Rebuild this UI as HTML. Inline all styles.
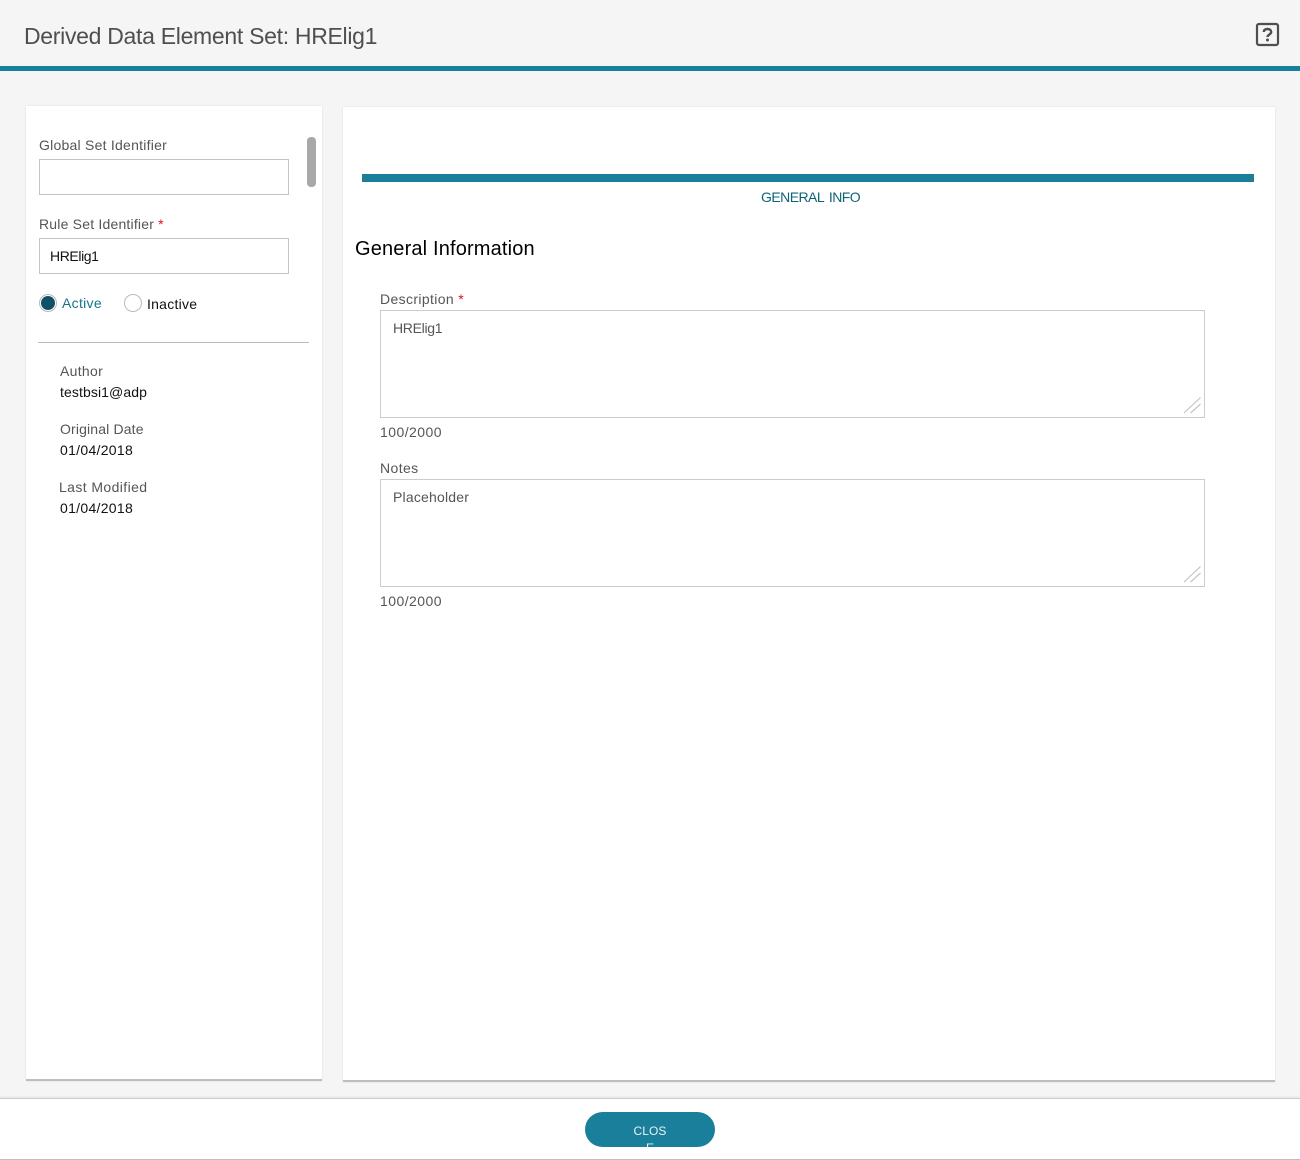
<!DOCTYPE html>
<html><head><meta charset="utf-8">
<style>
html,body{margin:0;padding:0;}
body{width:1300px;height:1160px;position:relative;overflow:hidden;background:#f5f5f5;font-family:"Liberation Sans",sans-serif;}
.a{position:absolute;white-space:nowrap;}
.t{font-size:14px;line-height:18px;color:#555;}
.d{color:#111;}
.box{position:absolute;box-sizing:border-box;background:#fff;border:1px solid #c4c4c4;}
.req{color:#e3101a;}
</style></head>
<body>
<div class="a" style="left:0;top:66px;width:1300px;height:5px;background:#17809b;"></div>
<div class="a" style="left:24px;top:20px;font-size:23px;letter-spacing:-.3px;line-height:32px;color:#4f4f4f;">Derived Data Element Set: HRElig1</div>
<svg class="a" style="left:1255px;top:22px;" width="25" height="25" viewBox="0 0 25 25"><rect x="2" y="2" width="21" height="21" rx="2" fill="none" stroke="#4f4f4f" stroke-width="2.2"/><path d="M8.800 10c0-2 1.500-3 3.700-3s3.700 1.200 3.700 3c0 2.500-3.700 2.500-3.700 5" fill="none" stroke="#4f4f4f" stroke-width="2.400"/><circle cx="12.500" cy="18" r="1.500" fill="#4f4f4f"/></svg>

<div class="a" style="left:26px;top:106px;width:296px;height:973px;background:#fff;border-bottom:2px solid #bdbdbd;box-shadow:0 0 2px rgba(0,0,0,.1);"></div>
<div class="a" style="left:307px;top:137px;width:9px;height:50px;border-radius:4px;background:#a8a8a8;"></div>
<div class="a t" style="left:39px;top:136px;letter-spacing:.24px;">Global Set Identifier</div>
<div class="box" style="left:39px;top:159px;width:250px;height:36px;"></div>
<div class="a t" style="left:39px;top:215px;letter-spacing:.2px;">Rule Set Identifier <span class="req">*</span></div>
<div class="box" style="left:39px;top:238px;width:250px;height:36px;"></div>
<div class="a t d" style="left:50px;top:247px;letter-spacing:-.4px;">HRElig1</div>
<div class="a" style="left:39px;top:294px;width:18px;height:18px;box-sizing:border-box;border:1px solid #bbb;border-radius:50%;background:#fff;"></div>
<div class="a" style="left:41px;top:296px;width:14px;height:14px;border-radius:50%;background:#0f5169;"></div>
<div class="a t" style="left:62px;top:294px;color:#17748d;letter-spacing:.3px;">Active</div>
<div class="a" style="left:124px;top:294px;width:18px;height:18px;box-sizing:border-box;border:1px solid #bbb;border-radius:50%;background:#fff;"></div>
<div class="a t d" style="left:147px;top:295px;letter-spacing:.25px;">Inactive</div>
<div class="a" style="left:38px;top:342px;width:271px;height:1px;background:#bbb;"></div>
<div class="a t" style="left:60px;top:362px;letter-spacing:.3px;">Author</div>
<div class="a t d" style="left:60px;top:383px;letter-spacing:.1px;">testbsi1@adp</div>
<div class="a t" style="left:60px;top:420px;letter-spacing:.15px;">Original Date</div>
<div class="a t d" style="left:60px;top:441px;letter-spacing:.3px;">01/04/2018</div>
<div class="a t" style="left:59px;top:478px;letter-spacing:.4px;">Last Modified</div>
<div class="a t d" style="left:60px;top:499px;letter-spacing:.3px;">01/04/2018</div>

<div class="a" style="left:343px;top:107px;width:932px;height:973px;background:#fff;border-bottom:2px solid #bdbdbd;box-shadow:0 0 2px rgba(0,0,0,.1);"></div>
<div class="a" style="left:362px;top:174px;width:892px;height:8px;background:#1a7f9a;"></div>
<div class="a t" style="left:761px;top:188px;color:#0f6378;letter-spacing:-.55px;word-spacing:2px;">GENERAL INFO</div>
<div class="a" style="left:355px;top:235px;font-size:20px;line-height:28px;color:#000;letter-spacing:.16px;">General Information</div>
<div class="a t" style="left:380px;top:290px;letter-spacing:.36px;">Description <span class="req">*</span></div>
<div class="box" style="left:380px;top:310px;width:825px;height:108px;border-color:#ccc;"></div>
<div class="a t" style="left:393px;top:319px;letter-spacing:-.3px;">HRElig1</div>
<svg class="a" style="left:1183px;top:396px;" width="18" height="18"><path d="M1 17L17.500 1.500M7.500 17L17.500 8" stroke="#c4c4c4" stroke-width="1.200" fill="none"/></svg>
<div class="a t" style="left:380px;top:423px;letter-spacing:.45px;">100/2000</div>
<div class="a t" style="left:380px;top:459px;letter-spacing:.4px;">Notes</div>
<div class="box" style="left:380px;top:479px;width:825px;height:108px;border-color:#ccc;"></div>
<div class="a t" style="left:393px;top:488px;letter-spacing:.2px;">Placeholder</div>
<svg class="a" style="left:1183px;top:565px;" width="18" height="18"><path d="M1 17L17.500 1.500M7.500 17L17.500 8" stroke="#c4c4c4" stroke-width="1.200" fill="none"/></svg>
<div class="a t" style="left:380px;top:592px;letter-spacing:.45px;">100/2000</div>

<div class="a" style="left:0;top:1098px;width:1300px;height:60px;background:#fff;border-top:1px solid #ccc;border-bottom:1px solid #bdbdbd;box-shadow:0 -1px 2px rgba(0,0,0,.08);"></div>
<div class="a" style="left:585px;top:1112px;width:130px;height:35px;border-radius:18px;background:#1a7f9a;overflow:hidden;color:#e8f3f6;font-size:12px;line-height:16px;text-align:center;letter-spacing:.1px;">
<div style="position:absolute;left:0;width:130px;top:11px;">CLOS</div>
<div style="position:absolute;left:0;width:130px;top:28px;">E</div>
</div>
</body></html>
